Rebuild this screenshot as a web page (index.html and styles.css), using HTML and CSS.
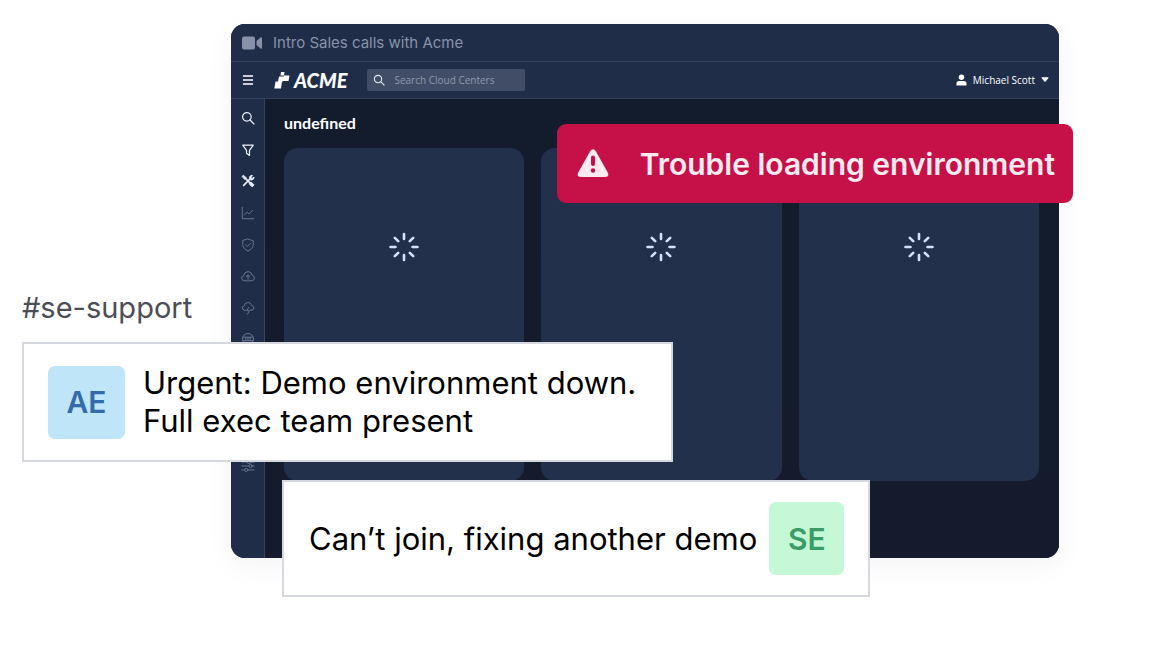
FILE: index.html
```html
<!DOCTYPE html>
<html lang="en">
<head>
    <meta charset="UTF-8">
    <title>Intro Sales calls with Acme</title>
    <link rel="stylesheet" href="styles.css">
</head>
<body>
    <svg width="0" height="0" class="symbols">
        <symbol id="search" viewBox="0 0 16 16"><circle cx="6.7" cy="6.7" r="4.9"/><path d="M10.3 10.3 14.8 14.8"/></symbol>
        <symbol id="spinner" viewBox="0 0 32 32"><path d="M16 3v5M16 24v5M2.5 16h5M24.5 16h5M6.8 6.8l3.4 3.4M21.8 21.8l3.4 3.4M6.8 25.2l3.4-3.4M21.8 10.2l3.4-3.4"/></symbol>
    </svg>

    <div class="stage">
        <div class="window">
            <header class="titlebar">
                <svg class="camera" viewBox="0 0 20 14"><rect width="13" height="13" y="0.5" rx="2"/><path d="M14.5 5 18.5 1.5Q20 .8 20 2.5v9Q20 13.2 18.5 12.5L14.5 9z"/></svg>
                <span>Intro Sales calls with Acme</span>
            </header>

            <nav class="navbar">
                <button class="menu" aria-label="Menu">
                    <svg viewBox="0 0 12 12"><path d="M1 2h10M1 6h10M1 10h10"/></svg>
                </button>
                <a class="logo" href="#">
                    <svg viewBox="0 0 16 17"><path d="M7 0h3.500L10 3.500H6.500zM10 3.500h5.500L14.500 9H9zM5 4.500h5L9 9.500H4zM1.500 9.500h6.500L7 16.500H.3z"/></svg>
                    <span>ACME</span>
                </a>
                <label class="search">
                    <svg class="line-icon"><use href="#search"/></svg>
                    <input type="text" placeholder="Search Cloud Centers" aria-label="Search Cloud Centers">
                </label>
                <button class="user">
                    <svg class="person" viewBox="0 0 12 12"><circle cx="6" cy="3" r="3"/><path d="M.5 12V9.800Q.5 7 3.500 7h5q3 0 3 2.800V12z"/></svg>
                    <span>Michael Scott</span>
                    <svg class="caret" viewBox="0 0 8 6"><path d="M.8.8h6.400L4 4.600z"/></svg>
                </button>
            </nav>

            <div class="body">
                <aside class="sidebar">
                    <svg class="line-icon" viewBox="0 0 16 16"><use href="#search"/></svg>
                    <svg class="line-icon" viewBox="0 0 16 16"><path d="M2 2.500h12L9.700 8.500v5.700L6.300 11.800V8.500z"/></svg>
                    <svg class="line-icon tools" viewBox="0 0 16 16"><path d="M4.500 4.500 13 13M3 13 10 6"/><path class="thin" d="M1.500 2.500 3 1.500l3 3-1.500 1.500zM9.500 4.500q0-3 3.500-3L11.500 4l1 1L15 3.500q0 3.500-3.500 3.500zM9.500 11l2-2 3.500 3.500-2 2z"/></svg>
                    <svg class="line-icon dim" viewBox="0 0 16 16"><path d="M1.500 1.500v13h13M4 10l3-3 2 2 4-4"/></svg>
                    <svg class="line-icon dim" viewBox="0 0 16 16"><path d="M8 1.200 14 3.200v4.300q0 4.800-6 7.300-6-2.500-6-7.300V3.200zM5.200 7.800l2 2 3.600-3.600"/></svg>
                    <svg class="line-icon dim" viewBox="0 0 16 16"><path d="M4 13.500Q.8 13.500.8 10.500 .8 8 3.300 7.500 3.500 3 8 3q4 0 4.800 4.200 2.400.6 2.400 3.200 0 3.100-3.200 3.100zM8 12V7M6 8.700l2-2 2 2"/></svg>
                    <svg class="line-icon dim" viewBox="0 0 16 16"><path d="M5.500 10.500H4Q1.500 10.200 1.500 7.800 1.500 5.800 3.700 5.500 4.200 1.800 8 1.800q3.700 0 4.300 3.500 2.400.4 2.400 2.700 0 2.200-2.700 2.500h-1.500M8.800 7.500 6.500 11h3L7.500 15"/></svg>
                    <svg class="line-icon dim" viewBox="0 0 16 16"><circle cx="8" cy="8" r="6.3"/><path d="M2 6h12M2 10h12M5.500 6v4M10.500 6v4M8 6v4"/></svg>
                    <svg class="line-icon dim" viewBox="0 0 16 16"><path d="M2 3h12v10H2zM2 7h12"/></svg>
                    <svg class="line-icon dim" viewBox="0 0 16 16"><circle cx="8" cy="8" r="6"/><path d="M8 4v4l3 2"/></svg>
                    <svg class="line-icon dim" viewBox="0 0 16 16"><circle cx="8" cy="5" r="3"/><path d="M2 14q0-5 6-5t6 5"/></svg>
                    <svg class="line-icon dim" viewBox="0 0 16 16"><path d="M1 3.500h6M11 3.500h4M1 8h8M13 8h2M1 12.500h3M8 12.500h7"/><circle cx="9" cy="3.5" r="1.8"/><circle cx="11" cy="8" r="1.8"/><circle cx="6" cy="12.5" r="1.8"/></svg>
                </aside>
                <main class="content">
                    <h1>undefined</h1>
                    <div class="cards">
                        <div class="card"><svg class="spinner"><use href="#spinner"/></svg></div>
                        <div class="card"><svg class="spinner"><use href="#spinner"/></svg></div>
                        <div class="card"><svg class="spinner"><use href="#spinner"/></svg></div>
                    </div>
                </main>
            </div>
        </div>

        <div class="alert" role="alert">
            <svg viewBox="0 0 32 30"><path class="sign" d="M13 2.500q3-4.500 6 0L30.500 23q2.500 5-2.500 5H4q-5 0-2.500-5z"/><path class="mark" d="M16 8.500v6.500"/><circle cx="16" cy="21.500" r="2.200"/></svg>
            <span>Trouble loading environment</span>
        </div>

        <section class="channel">
            <h2>#se-support</h2>
            <div class="message">
                <div class="avatar ae">AE</div>
                <p>Urgent: Demo environment down.<br>Full exec team present</p>
            </div>
        </section>

        <div class="message reply">
            <p>Can’t join, fixing another demo</p>
            <div class="avatar se">SE</div>
        </div>
    </div>
</body>
</html>
```

FILE: styles.css
```css
* {
    box-sizing: border-box;
}
body {
    margin: 0;
    background-color: white;
    font-family: Inter, sans-serif;
}
h1, h2, p {
    margin: 0;
}
button {
    padding: 0;
    border: none;
    background: none;
    color: inherit;
    cursor: pointer;
}
svg {
    display: block;
    flex-shrink: 0;
}
.symbols {
    position: absolute;
}
.stage {
    position: relative;
    min-height: 664px;
    padding: 24px 103px 64px 231px;
}

/* app window */
.window {
    border-radius: 14px;
    overflow: hidden;
    background-color: #141c2d;
    color: white;
    box-shadow: 0 8px 28px rgba(30, 40, 80, 0.05);
}
.titlebar {
    display: flex;
    align-items: center;
    gap: 11px;
    height: 38px;
    padding: 0 11px;
    background-color: #202d49;
    border-bottom: 1px solid #35435f;
    color: #8792a8;
    font-size: 15px;
}
.camera {
    width: 20px;
    height: 14px;
    fill: #8792a8;
}
.navbar {
    display: flex;
    align-items: center;
    height: 37px;
    padding: 0 10px 0 11px;
    background-color: #202d49;
    border-bottom: 1px solid #35435f;
}
.menu svg {
    width: 12px;
    height: 12px;
    stroke: white;
    stroke-width: 1.6;
}
.logo {
    display: flex;
    align-items: center;
    gap: 4px;
    margin: 0 20px;
    color: white;
    font: italic 900 20px Lato, sans-serif;
    text-decoration: none;
}
.logo svg {
    width: 16px;
    height: 17px;
    fill: white;
}
.search {
    display: flex;
    align-items: center;
    gap: 9px;
    width: 158px;
    height: 22px;
    padding: 0 6px;
    border-radius: 2px;
    background-color: #414d67;
}
.search .line-icon {
    width: 12px;
    height: 12px;
}
.search input {
    width: 100%;
    min-width: 0;
    padding: 0;
    border: none;
    background: none;
    color: white;
    font: 10px "Open Sans", sans-serif;
}
.search input::placeholder {
    color: #8e98ab;
}
.user {
    display: flex;
    align-items: center;
    gap: 6px;
    margin-left: auto;
    font: 10px "Open Sans", sans-serif;
}
.person {
    width: 11px;
    height: 12px;
    fill: white;
}
.caret {
    width: 8px;
    height: 6px;
    fill: white;
    stroke: white;
    stroke-linejoin: round;
}
.body {
    display: flex;
}
.line-icon {
    width: 14px;
    height: 14px;
    fill: none;
    stroke: #e8eefb;
    stroke-width: 1.4;
    stroke-linecap: round;
    stroke-linejoin: round;
}
.tools {
    stroke-width: 2;
}
.thin {
    stroke-width: 1;
    fill: #e8eefb;
}
.dim {
    stroke: #6f7e99;
    stroke-width: 1;
}
.sidebar {
    display: flex;
    flex-direction: column;
    align-items: center;
    justify-content: space-between;
    width: 34px;
    padding: 12px 0 85px;
    background-color: #202d49;
    border-right: 1px solid #35435f;
}
.content {
    flex: 1;
    padding: 12px 20px 77px 19px;
    background: linear-gradient(#131c2c, #151b2d);
}
.content h1 {
    margin-bottom: 13px;
    font: bold 16px/24px Lato, sans-serif;
}
.cards {
    display: grid;
    grid-template-columns: repeat(3, 1fr);
    gap: 17px;
}
.card {
    height: 333px;
    padding-top: 83px;
    border-radius: 14px;
    background-color: #23304c;
}
.spinner {
    width: 32px;
    height: 32px;
    margin: 0 auto;
    stroke: #d3e2fa;
    stroke-width: 2.6;
    stroke-linecap: round;
}

/* overlays */
.alert {
    position: absolute;
    top: 124px;
    right: 89px;
    display: flex;
    align-items: center;
    gap: 31px;
    height: 79px;
    padding: 0 18px 0 20px;
    border-radius: 9px;
    background-color: #c51147;
    color: #ffeaf0;
    font-size: 30px;
    font-weight: 600;
}
.alert svg {
    width: 32px;
    height: 30px;
}
.sign {
    fill: #ffeaf0;
}
.mark {
    stroke: #c51147;
    stroke-width: 4;
    stroke-linecap: round;
}
.alert circle {
    fill: #c51147;
}
.channel {
    position: absolute;
    top: 289px;
    left: 22px;
}
.channel h2 {
    margin-bottom: 15px;
    color: #4c4d55;
    font-size: 29px;
    font-weight: 400;
    line-height: 38px;
}
.message {
    display: flex;
    align-items: center;
    gap: 18px;
    height: 120px;
    padding: 0 35px 0 24px;
    border: 2px solid #d5d8df;
    background-color: white;
    color: black;
    font-size: 31px;
    line-height: 38px;
    white-space: nowrap;
}
.avatar {
    display: flex;
    align-items: center;
    justify-content: center;
    width: 77px;
    height: 73px;
    border-radius: 7px;
    font-size: 30px;
    font-weight: 600;
}
.ae {
    background-color: #bfe5f9;
    color: #356bab;
}
.se {
    width: 75px;
    background-color: #c5f8d7;
    color: #3a9c68;
}
.reply {
    position: absolute;
    top: 480px;
    left: 282px;
    gap: 12px;
    height: 117px;
    padding: 0 24px 0 25px;
}
```
